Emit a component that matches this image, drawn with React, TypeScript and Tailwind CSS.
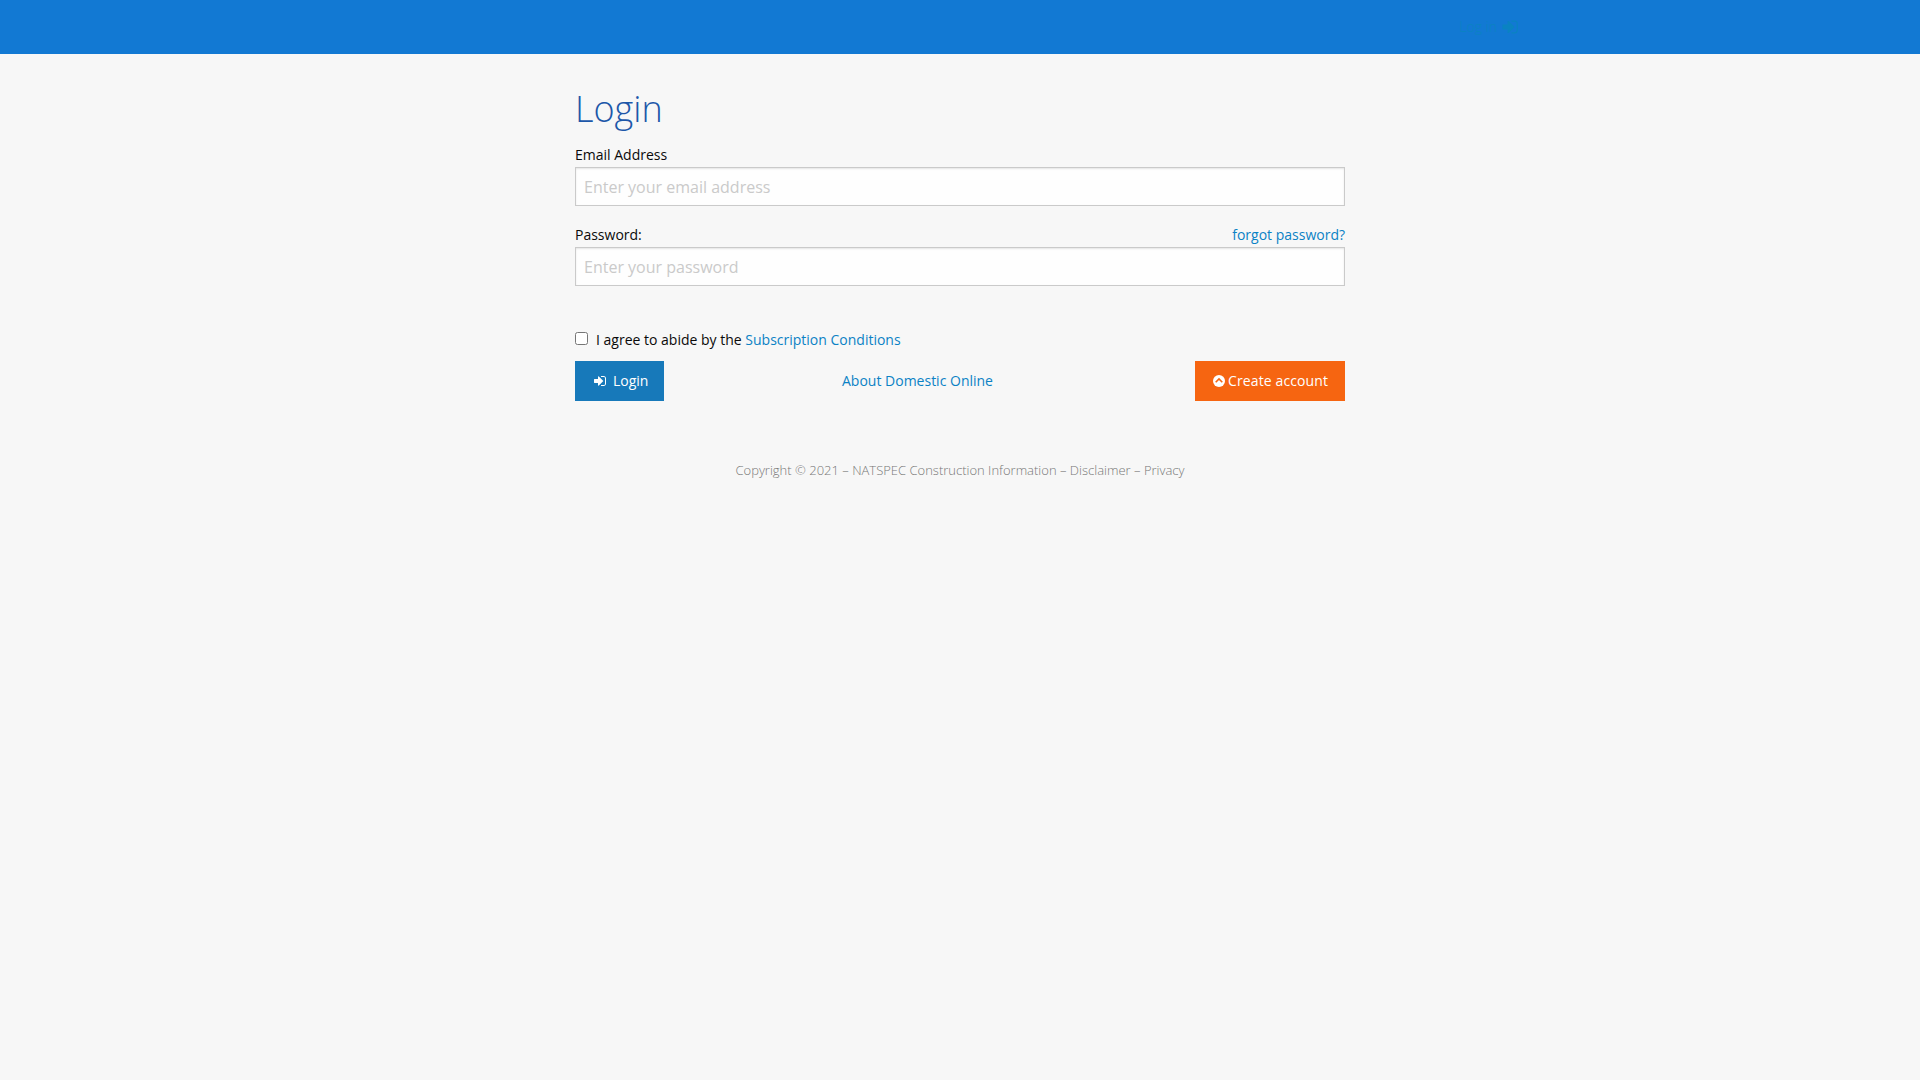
import React from "react";

function SignInIcon({ className = "" }: { className?: string }) {
  return (
    <svg viewBox="0 0 1664 1792" fill="currentColor" className={className} aria-hidden="true">
      <path d="M1312 896q0 26-19 45l-544 544q-19 19-45 19t-45-19-19-45v-288h-448q-26 0-45-19t-19-45v-384q0-26 19-45t45-19h448v-288q0-26 19-45t45-19 45 19l544 544q19 19 19 45zm352-352v704q0 119-84.5 203.5t-203.5 84.5h-320q-13 0-22.5-9.5t-9.5-22.5q0-4-1-20t-.5-26.5 3-23.5 10-19.5 20.5-6.5h320q66 0 113-47t47-113v-704q0-66-47-113t-113-47h-312l-11.5-1-11.5-3-8-5.5-7-9-2-13.5q0-4-1-20t-.5-26.5 3-23.5 10-19.5 20.5-6.5h320q119 0 203.5 84.5t84.5 203.5z" />
    </svg>
  );
}

function ChevronCircleUpIcon() {
  return (
    <svg viewBox="0 0 12 12" className="size-3" aria-hidden="true">
      <circle cx="6" cy="6" r="6" fill="currentColor" />
      <path d="M2.7 7.2 6 3.9l3.3 3.3" fill="none" stroke="#f66511" strokeWidth="1.6" />
    </svg>
  );
}

const inputClass =
  "block h-[39px] w-full border border-[#cacaca] bg-[#fefefe] px-2 text-base text-black shadow-[inset_0_1px_2px_rgba(10,10,10,0.1)] outline-none placeholder:text-[#cacaca] placeholder:opacity-100";

export default function App() {
  return (
    <div className="min-h-screen bg-[#f7f7f7] font-['Open_Sans',sans-serif] text-sm leading-[21px] text-[#0a0a0a]">
      <header className="flex h-[54px] items-start justify-end bg-[#1279d3] pt-4 pr-[402px]">
        <a className="flex items-center gap-1 font-light text-[#0a83c2]">
          Log in <SignInIcon className="h-[18px] w-[17px]" />
        </a>
      </header>
      <main className="mx-auto w-[770px] pt-[30px]">
        <h1 className="h-[60px] text-[36px] leading-[50px] font-light text-[#1d57a9]">Login</h1>
        <label className="block h-[23px]">Email Address</label>
        <input className={inputClass} placeholder="Enter your email address" />
        <div className="mt-[18px] flex h-[23px] justify-between">
          <label>Password:</label>
          <a className="text-[#0b82c5]">forgot password?</a>
        </div>
        <input className={inputClass} type="password" placeholder="Enter your password" />
        <label className="mt-[43px] flex h-8">
          <input type="checkbox" className="mt-[3px] mr-2 size-[13px]" />
          <span>
            I agree to abide by the <a className="text-[#0b82c5]">Subscription Conditions</a>
          </span>
        </label>
        <div className="flex h-10">
          <button className="flex h-10 w-[89px] items-center gap-[7px] bg-[#1779ba] pb-px pl-[18px] text-white">
            <SignInIcon className="h-3.5 w-[13px]" />
            Login
          </button>
          <a className="ml-[178px] leading-10 text-[#0b82c5]">About Domestic Online</a>
          <button className="ml-auto flex h-10 w-[150px] items-center gap-[3px] bg-[#f66511] pb-px pl-[18px] tracking-[0.12px] text-white">
            <ChevronCircleUpIcon />
            Create account
          </button>
        </div>
        <footer className="mt-[59px] text-center text-[13px] font-light text-[#777777]">
          Copyright © 2021 – NATSPEC Construction Information – Disclaimer – Privacy
        </footer>
      </main>
    </div>
  );
}
